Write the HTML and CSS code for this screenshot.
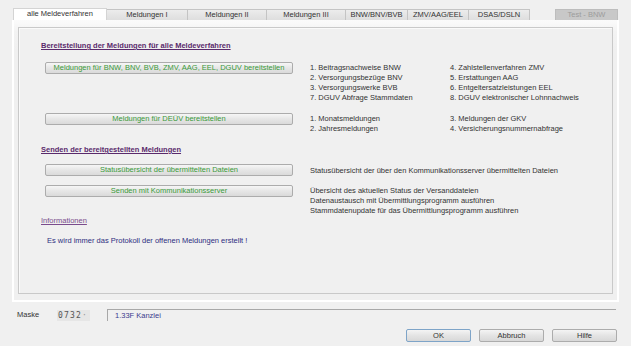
FILE: index.html
```html
<!DOCTYPE html>
<html lang="de">
<head>
<meta charset="UTF-8">
<meta name="viewport" content="width=device-width, initial-scale=1.0">
<title>Meldeverfahren</title>
<link rel="stylesheet" href="styles.css">
</head>
<body>
<div class="window">
  <div class="tabs">
    <div class="tab tab-active w94">alle Meldeverfahren</div>
    <div class="tab w81">Meldungen I</div>
    <div class="tab w79">Meldungen II</div>
    <div class="tab w79">Meldungen III</div>
    <div class="tab w62">BNW/BNV/BVB</div>
    <div class="tab w61">ZMV/AAG/EEL</div>
    <div class="tab w61">DSAS/DSLN</div>
    <div class="tab tab-disabled w63">Test - BNW</div>
  </div>

  <div class="pane">
    <div class="group">
      <h2 class="section-title">Bereitstellung der Meldungen für alle Meldeverfahren</h2>

      <div class="row row-first">
        <button class="action">Meldungen für BNW, BNV, BVB, ZMV, AAG, EEL, DGUV bereitstellen</button>
        <ul class="options">
          <li>1. Beitragsnachweise BNW</li>
          <li>4. Zahlstellenverfahren ZMV</li>
          <li>2. Versorgungsbezüge BNV</li>
          <li>5. Erstattungen AAG</li>
          <li>3. Versorgungswerke BVB</li>
          <li>6. Entgeltersatzleistungen EEL</li>
          <li>7. DGUV Abfrage Stammdaten</li>
          <li>8. DGUV elektronischer Lohnnachweis</li>
        </ul>
      </div>

      <div class="row row-deuev">
        <button class="action">Meldungen für DEÜV bereitstellen</button>
        <ul class="options">
          <li>1. Monatsmeldungen</li>
          <li>3. Meldungen der GKV</li>
          <li>2. Jahresmeldungen</li>
          <li>4. Versicherungsnummernabfrage</li>
        </ul>
      </div>

      <h2 class="section-title title-send">Senden der bereitgestellten Meldungen</h2>

      <div class="row row-status">
        <button class="action">Statusübersicht der übermittelten Dateien</button>
        <div class="notes">Statusübersicht der über den Kommunikationsserver übermittelten Dateien</div>
      </div>

      <div class="row row-send">
        <button class="action">Senden mit Kommunikationsserver</button>
        <div class="notes">
          Übersicht des aktuellen Status der Versanddateien<br>
          Datenaustausch mit Übermittlungsprogramm ausführen<br>
          Stammdatenupdate für das Übermittlungsprogramm ausführen
        </div>
      </div>

      <div class="info-title">Informationen</div>
      <p class="info-text">Es wird immer das Protokoll der offenen Meldungen erstellt !</p>
    </div>
  </div>

  <div class="status">
    <span class="mask-label">Maske</span>
    <span class="mask-code">0732<span class="dot">·</span></span>
    <div class="mask-name">1.33F Kanzlei</div>
  </div>

  <div class="dialog-buttons">
    <button class="dlg dlg-default">OK</button>
    <button class="dlg">Abbruch</button>
    <button class="dlg">Hilfe</button>
  </div>
</div>
</body>
</html>
```

FILE: styles.css
```css
body {
  margin: 0;
  padding: 0;
  font-family: "Liberation Sans", Arial, sans-serif;
  font-size: 7.5px;
  line-height: 10px;
  color: #333;
  background-color: #f0f0f0;
}

.window {
  width: 631px;
  height: 346px;
  overflow: hidden;
}

/* tab strip */
.tabs {
  display: flex;
  align-items: flex-end;
  height: 20px;
  margin: 0 13px;
}

.tab {
  box-sizing: border-box;
  height: 11px;
  line-height: 10px;
  text-align: center;
  background: linear-gradient(#ececec, #dedede);
  border: 1px solid #c4c4c4;
  border-bottom: none;
  border-left: none;
  color: #333;
}

.tab-active {
  height: 12px;
  background: #fff;
  border-left: 1px solid #d4d4d4;
  border-color: #d4d4d4;
}

.tab-disabled {
  margin-left: auto;
  background: #c8c8c8;
  border: 1px solid #bdbdbd;
  border-bottom: none;
  color: #9c9c9c;
}

.w94 { width: 94px; }
.w81 { width: 81px; }
.w79 { width: 79px; }
.w62 { width: 62px; }
.w61 { width: 61px; }
.w63 { width: 63px; }

/* tab pane */
.pane {
  margin: 0 12px;
  height: 282px;
  box-sizing: border-box;
  padding: 7px 4px 6px 4px;
  border: 2px solid #fff;
  border-top: none;
  background: linear-gradient(#fbfbfb, #f3f3f3 12px, #f0f0f0 30px);
}

.group {
  height: 100%;
  box-sizing: border-box;
  border: 1px solid #c9c9c9;
  box-shadow: inset 1px 1px 0 #fafafa;
  background: #f0f0f0;
  padding-top: 13px;
}

.section-title {
  margin: 0 0 0 22px;
  font-size: 7.5px;
  font-weight: bold;
  line-height: 10px;
  color: #5a2a6c;
  text-decoration: underline;
}

.title-send {
  margin-top: 11px;
}

.row {
  display: grid;
  grid-template-columns: 248px 1fr;
  column-gap: 17px;
  align-items: start;
  margin-left: 26px;
}

.row-first { margin-top: 11px; }
.row-deuev { margin-top: 10px; }
.row-status { margin-top: 9px; }
.row-send { margin-top: 9px; }

.action {
  height: 12px;
  padding: 0;
  font-family: inherit;
  font-size: 7.5px;
  line-height: 10px;
  color: #3a9a3a;
  background: linear-gradient(#f6f6f6, #e6e6e6 50%, #dadada);
  border: 1px solid #acacac;
  border-radius: 2px;
}

.options {
  list-style: none;
  margin: 0;
  padding: 1px 0 0 0;
  display: grid;
  grid-template-columns: 140px auto;
}

.notes {
  padding-top: 1px;
}

.row-status .notes {
  padding-top: 2px;
}

.info-title {
  margin-left: 22px;
  color: #7a4c8c;
  text-decoration: underline;
}

.info-text {
  margin: 10px 0 0 28px;
  color: #2e2e80;
}

/* bottom status line */
.status {
  display: flex;
  align-items: center;
  height: 12px;
  margin-top: 7px;
  padding-left: 17px;
}

.mask-label {
  width: 40px;
}

.mask-code {
  box-sizing: border-box;
  width: 33px;
  height: 11px;
  line-height: 11px;
  padding-left: 1px;
  background: #e6e6e6;
  font-family: "DejaVu Sans Mono", "Liberation Mono", monospace;
  font-size: 8px;
  letter-spacing: 1.2px;
  color: #555;
}

.mask-code .dot {
  color: #999;
  letter-spacing: 0;
}

.mask-name {
  flex: 1;
  box-sizing: border-box;
  height: 12px;
  margin-left: 17px;
  margin-right: 15px;
  padding-left: 7px;
  line-height: 12px;
  border-top: 1px solid #a8a8a8;
  border-left: 1px solid #a8a8a8;
  color: #3a3a8e;
}

/* dialog buttons */
.dialog-buttons {
  display: flex;
  justify-content: flex-end;
  gap: 8px;
  margin-top: 8px;
  margin-right: 14px;
}

.dlg {
  width: 65px;
  height: 13px;
  padding: 0;
  font-family: inherit;
  font-size: 7.5px;
  line-height: 11px;
  color: #333;
  background: linear-gradient(#f4f4f4, #e4e4e4 50%, #d8d8d8);
  border: 1px solid #acacac;
  border-radius: 2px;
}

.dlg-default {
  border-color: #7ea4c8;
}
```
